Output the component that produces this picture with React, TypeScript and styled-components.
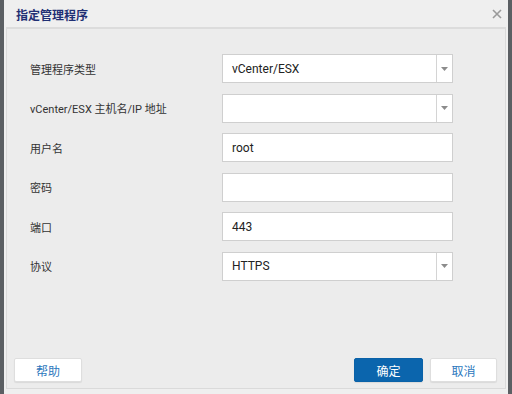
import React from 'react'
import styled, { createGlobalStyle } from 'styled-components'

const GlobalStyle = createGlobalStyle`
  html, body {
    margin: 0;
    padding: 0;
    width: 512px;
    height: 394px;
    overflow: hidden;
    background: #5b5f63;
  }
  * {
    box-sizing: border-box;
  }
`

const PageStyled = styled.div`
  display: flex;
  height: 394px;
  padding-left: 4px;
  padding-right: 4px;
`

const DialogStyled = styled.div`
  display: flex;
  flex-direction: column;
  width: 504px;
  height: 394px;
  background-color: #efefef;
  font-family: Roboto, 'Noto Sans CJK SC', sans-serif;
`

const TitleBarStyled = styled.div`
  display: flex;
  align-items: center;
  justify-content: space-between;
  height: 29px;
  padding: 1px 3px 0 10px;
  border-bottom: 2px solid #dcdcdc;
  margin: 0 2px;
`

const TitleStyled = styled.div`
  font-size: 12px;
  font-weight: bold;
  color: #1f2f74;
`

const CloseButtonStyled = styled.button`
  display: flex;
  align-items: center;
  justify-content: center;
  width: 12px;
  height: 12px;
  padding: 0;
  border: none;
  background: transparent;
`

const BodyStyled = styled.div`
  flex: 1;
  display: flex;
  flex-direction: column;
  justify-content: space-between;
  margin: 0 2px 5px 2px;
  border: 1px solid #dadada;
  border-top: none;
  background-color: #ececec;
`

const FormStyled = styled.div`
  display: grid;
  grid-template-columns: 192px 231px;
  grid-auto-rows: 29px;
  row-gap: 10.5px;
  padding: 25px 0 0 23px;
`

const LabelStyled = styled.div`
  display: flex;
  align-items: center;
  font-family: 'Liberation Sans Narrow', Roboto, 'Noto Sans CJK SC', sans-serif;
  font-size: 11px;
  color: #333;
`

const FieldStyled = styled.div`
  display: flex;
  align-items: stretch;
  border: 1px solid #cfcfcf;
  background-color: #fff;
`

const ValueStyled = styled.div`
  flex: 1;
  display: flex;
  align-items: center;
  padding-left: 9px;
  font-size: 12px;
  color: #222;
`

const ArrowStyled = styled.div`
  display: flex;
  align-items: center;
  justify-content: center;
  width: 16px;
  border-left: 1px solid #d4d4d4;
`

const FooterStyled = styled.div`
  display: flex;
  align-items: center;
  justify-content: space-between;
  padding: 0 8px 6px 7px;
`

const ButtonGroupStyled = styled.div`
  display: flex;
  gap: 7px;
`

const ButtonStyled = styled.button<{ primary?: boolean; w: number }>`
  width: ${(p) => p.w}px;
  height: 24px;
  border: 1px solid ${(p) => (p.primary ? '#0a62a8' : '#dedede')};
  border-radius: 2px;
  background-color: ${(p) => (p.primary ? '#0b65ad' : '#fff')};
  color: ${(p) => (p.primary ? '#fff' : '#2c78bd')};
  font-family: Roboto, 'Noto Sans CJK SC', sans-serif;
  font-size: 12px;
  box-shadow: 0 1px 1px rgba(0, 0, 0, 0.08);
  padding: 0;
`

const Arrow = () => (
  <ArrowStyled>
    <svg width="7" height="4" viewBox="0 0 7 4">
      <path d="M0 0 L7 0 L3.5 4 Z" fill="#8c8c8c" />
    </svg>
  </ArrowStyled>
)

type FieldProps = {
  value?: string
  select?: boolean
}

const Field = ({ value, select }: FieldProps) => (
  <FieldStyled>
    <ValueStyled>{value}</ValueStyled>
    {select && <Arrow />}
  </FieldStyled>
)

const rows: { label: string; value?: string; select?: boolean }[] = [
  { label: '管理程序类型', value: 'vCenter/ESX', select: true },
  { label: 'vCenter/ESX 主机名/IP 地址', select: true },
  { label: '用户名', value: 'root' },
  { label: '密码' },
  { label: '端口', value: '443' },
  { label: '协议', value: 'HTTPS', select: true },
]

export default function App() {
  return (
    <>
      <GlobalStyle />
      <PageStyled>
        <DialogStyled>
          <TitleBarStyled>
            <TitleStyled>指定管理程序</TitleStyled>
            <CloseButtonStyled>
              <svg width="10" height="10" viewBox="0 0 10 10">
                <path d="M1 1 L9 9 M9 1 L1 9" stroke="#9a9a9a" strokeWidth="1.6" />
              </svg>
            </CloseButtonStyled>
          </TitleBarStyled>
          <BodyStyled>
            <FormStyled>
              {rows.map((row) => (
                <React.Fragment key={row.label}>
                  <LabelStyled>{row.label}</LabelStyled>
                  <Field value={row.value} select={row.select} />
                </React.Fragment>
              ))}
            </FormStyled>
            <FooterStyled>
              <ButtonStyled w={68}>帮助</ButtonStyled>
              <ButtonGroupStyled>
                <ButtonStyled primary w={69}>
                  确定
                </ButtonStyled>
                <ButtonStyled w={67}>取消</ButtonStyled>
              </ButtonGroupStyled>
            </FooterStyled>
          </BodyStyled>
        </DialogStyled>
      </PageStyled>
    </>
  )
}
